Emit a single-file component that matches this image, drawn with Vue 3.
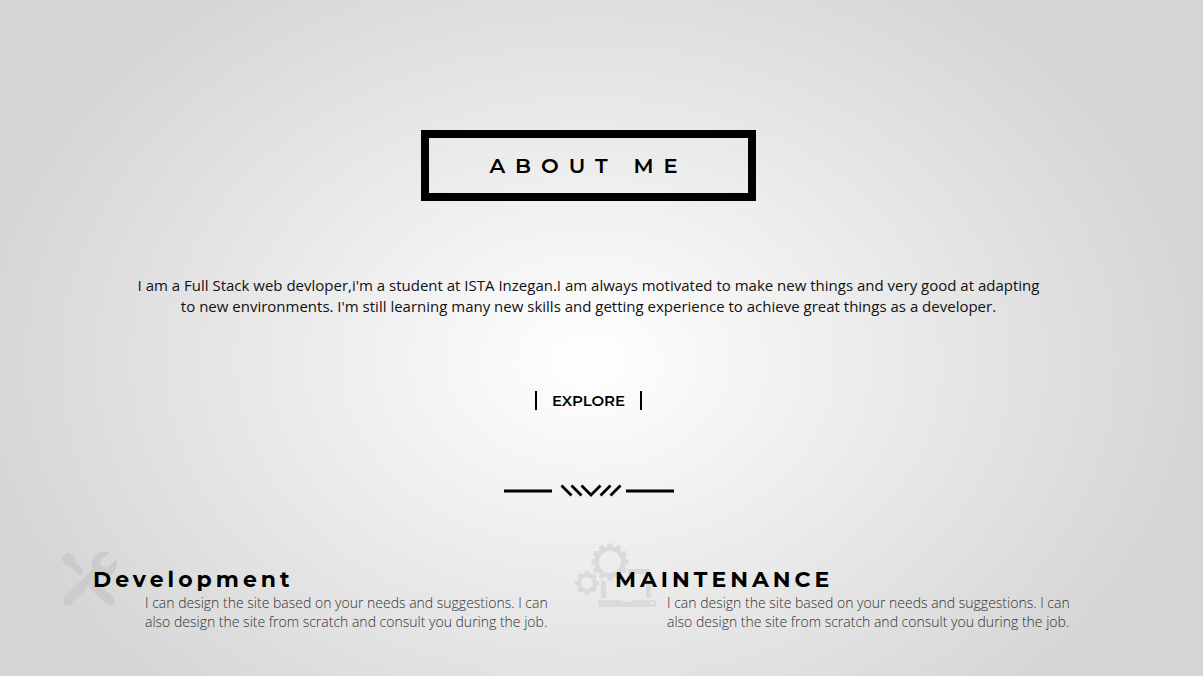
<script setup>
const services = [
  {
    icon: 'tools',
    title: 'Development',
    text: 'I can design the site based on your needs and suggestions. I can also design the site from scratch and consult you during the job.',
  },
  {
    icon: 'gears',
    title: 'MAINTENANCE',
    text: 'I can design the site based on your needs and suggestions. I can also design the site from scratch and consult you during the job.',
  },
]

const teeth = Array.from({ length: 12 }, (_, i) => i * 30)
const smallTeeth = Array.from({ length: 8 }, (_, i) => i * 45)
</script>

<template>
  <main class="about">
    <h1 class="heading">ABOUT ME</h1>
    <p class="intro">
      I am a Full Stack web devloper,i'm a student at ISTA Inzegan.I am always motivated to make new things and very good at adapting to new environments. I'm still learning many new skills and getting experience to achieve great things as a developer.
    </p>
    <button class="explore" type="button">EXPLORE</button>
    <svg class="divider" viewBox="0 0 170 14" aria-hidden="true">
      <path d="M0 7H48M122 7H170" stroke-width="3" />
      <path d="M57.500 1.500l10 10M67.500 1.500l10 10M77.500 1.500l9.500 9.500 9.500-9.500M106.500 1.500l-10 10M116.500 1.500l-10 10" stroke-width="2.800" />
    </svg>
    <section class="services">
      <article v-for="s in services" :key="s.title" class="service">
        <svg v-if="s.icon === 'tools'" class="icon tools" viewBox="0 0 58 56" aria-hidden="true">
          <path d="M1 7L7 1l7 4 2 7 8 8-4 5-9-9-6-2z" />
          <path d="M50 2C44 -1 37 1 34 6c-3 4-3 8-1 12L4 46c-4 5 2 11 7 7l28-28c5 2 11 1 14-3 4-4 5-9 3-14l-8 8-7-1-1-6z" />
          <path d="M35 30l18 16c5 5-1 10-6 7L29 37z" />
        </svg>
        <svg v-else class="icon gears" viewBox="0 0 82 66" aria-hidden="true">
          <g transform="translate(35 19)">
            <circle r="13.500" class="ring" />
            <rect v-for="a in teeth" :key="a" x="-2.500" y="-18.500" width="5" height="5" :transform="`rotate(${a})`" />
          </g>
          <g transform="translate(12 40)">
            <circle r="8" class="ring small" />
            <rect v-for="a in smallTeeth" :key="a" x="-2.200" y="-12" width="4.400" height="4" :transform="`rotate(${a})`" />
          </g>
          <path d="M26 38h5v17h-5zM53 26h21q2 0 2 2v27h-5V31H53z" />
          <path fill-rule="evenodd" d="M23 57h24q1 3 4 2h6l2-2h20q2 0 2 2v3q0 2-2 2H25q-2 0-2-2zM75 59v2h3v-2z" />
        </svg>
        <h2 class="title">{{ s.title }}</h2>
        <p class="text">{{ s.text }}</p>
      </article>
    </section>
  </main>
</template>

<style>
body {
  background: #d5d5d5;
}
</style>

<style scoped>
.about {
  box-sizing: border-box;
  min-height: 100vh;
  padding: 130px 26px 44px 0;
  display: flex;
  flex-direction: column;
  align-items: center;
  color: #000;
  font-family: "Open Sans", "Noto Sans", sans-serif;
  background: radial-gradient(ellipse 620px 465px at calc(50% - 13px) 362px, #fff, #d5d5d5);
}

.heading {
  margin: 0;
  padding: 0 60px;
  border: 8px solid #000;
  font: 600 21px/55px Montserrat, Inter, sans-serif;
  letter-spacing: 10px;
}

.intro {
  max-width: 920px;
  margin: 74px 0 0;
  color: #111;
  font-size: 15px;
  line-height: 21px;
  text-align: center;
}

.explore {
  margin: 74px 0 0;
  padding: 0 15px;
  border: 0 solid #000;
  border-width: 0 2px;
  background: none;
  color: #000;
  font: 600 15px/19px Montserrat, Inter, sans-serif;
}

.divider {
  width: 170px;
  height: 14px;
  margin-top: 74px;
  fill: none;
  stroke: #000;
}

.services {
  box-sizing: border-box;
  width: 100%;
  margin-top: 68px;
  padding: 0 40px 0 93px;
  display: grid;
  grid-template-columns: 1fr 1fr;
}

.service {
  position: relative;
}

.icon {
  position: absolute;
  fill: #cbcbcb;
}

.tools {
  width: 58px;
  height: 56px;
  left: -33px;
  top: -15px;
}

.gears {
  width: 82px;
  height: 66px;
  left: -40px;
  top: -23px;
  fill: #dadada;
}

.ring {
  fill: none;
  stroke: #dadada;
  stroke-width: 5;
}

.small {
  stroke-width: 4;
}

.title {
  position: relative;
  margin: 0;
  font: 700 22px/27px Montserrat, Inter, sans-serif;
  letter-spacing: 4px;
}

.text {
  position: relative;
  max-width: 420px;
  margin: 0 0 0 52px;
  color: #333;
  font-size: 14px;
  font-weight: 300;
  line-height: 19px;
}
</style>
